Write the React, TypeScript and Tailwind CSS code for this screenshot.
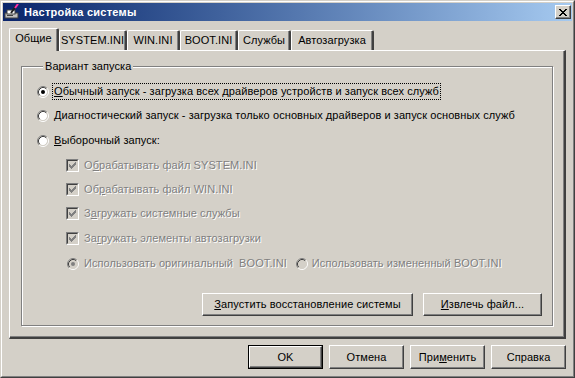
import React from 'react'

const font = "font-['Liberation_Sans',Arial,sans-serif]"
const dis = 'text-[#808080] [text-shadow:1px_1px_0_#ffffff]'

function Radio({ checked, disabled }: { checked?: boolean; disabled?: boolean }) {
  return (
    <svg width="12" height="12" viewBox="0 0 12 12" className="shrink-0">
      <circle cx="6" cy="6" r="4.2" fill={disabled ? '#d4d0c8' : '#ffffff'} />
      <path d="M9.89 2.11A5.5 5.5 0 0 0 2.11 9.89" stroke="#808080" fill="none" />
      <path d="M2.11 9.89A5.5 5.5 0 0 0 9.89 2.11" stroke="#ffffff" fill="none" />
      <path d="M9.18 2.82A4.5 4.5 0 0 0 2.82 9.18" stroke="#404040" fill="none" />
      <path d="M2.82 9.18A4.5 4.5 0 0 0 9.18 2.82" stroke="#d4d0c8" fill="none" />
      {checked && <circle cx="6" cy="6" r="2" fill={disabled ? '#808080' : '#000000'} />}
    </svg>
  )
}

const checkPx = [
  [6, 0], [5, 1], [6, 1], [0, 2], [4, 2], [5, 2], [6, 2],
  [0, 3], [1, 3], [3, 3], [4, 3], [5, 3], [0, 4], [1, 4], [2, 4], [3, 4], [4, 4],
  [1, 5], [2, 5], [3, 5], [2, 6],
]

function Check() {
  return (
    <div className="w-[13px] h-[13px] shrink-0 border border-t-[#808080] border-l-[#808080] border-r-white border-b-white">
      <div className="w-full h-full border border-t-[#404040] border-l-[#404040] border-r-[#d4d0c8] border-b-[#d4d0c8] bg-[#d4d0c8] flex items-center justify-center">
        <svg width="7" height="7" viewBox="0 0 7 7" shapeRendering="crispEdges">
          {checkPx.map(([x, y]) => (
            <rect key={`${x}-${y}`} x={x} y={y} width="1" height="1" fill="#808080" />
          ))}
        </svg>
      </div>
    </div>
  )
}

function Button({ children, className }: { children: React.ReactNode; className: string }) {
  return (
    <div className={`h-[23px] border border-t-white border-l-white border-r-[#404040] border-b-[#404040] shadow-[inset_-1px_-1px_#808080] flex items-center justify-center ${className}`}>
      {children}
    </div>
  )
}

function Tab({ label, w, active }: { label: string; w: string; active?: boolean }) {
  return (
    <div
      className={`${w} ${active ? 'h-[23px] relative z-10 -mb-px bg-[#d4d0c8]' : 'h-[20px]'} rounded-t-[2px] border-t border-l border-t-white border-l-white border-r-2 border-r-[#404040] shadow-[inset_-1px_0_#808080] flex items-start justify-center pt-[3px]`}
    >
      {label}
    </div>
  )
}

function Row({ children, className }: { children: React.ReactNode; className: string }) {
  return <div className={`flex items-center h-[17px] ${className}`}>{children}</div>
}

export default function App() {
  return (
    <div className={`w-[575px] h-[378px] bg-[#d4d0c8] text-[11px] leading-[13px] tracking-[0.08px] text-black ${font} border border-t-[#d4d0c8] border-l-[#d4d0c8] border-r-[#404040] border-b-[#404040]`}>
      <div className="h-full flex flex-col p-px border border-t-white border-l-white border-r-[#808080] border-b-[#808080]">
        {/* title bar */}
        <div className="h-[18px] shrink-0 flex items-center pl-[1px] pr-[1px] bg-gradient-to-r from-[#0a246a] to-[#a6caf0]">
          <svg width="16" height="16" viewBox="0 0 16 16" className="shrink-0">
            <rect x="1" y="9" width="13" height="5" fill="#c0c0c0" stroke="#404040" strokeWidth="1" />
            <rect x="3" y="6" width="8" height="4" fill="#ffffff" stroke="#404040" strokeWidth="1" />
            <rect x="3" y="11" width="6" height="1" fill="#404040" />
            <path d="M7 9L12 2" stroke="#202020" strokeWidth="2" />
            <path d="M11 4L14 0" stroke="#ff2ea0" strokeWidth="2" />
          </svg>
          <span className="ml-[4px] font-bold text-white tracking-[0.25px]">Настройка системы</span>
          <div className="ml-auto w-[16px] h-[14px] bg-[#d4d0c8] border border-t-white border-l-white border-r-[#404040] border-b-[#404040] shadow-[inset_-1px_-1px_#808080] flex items-center justify-center">
            <svg width="8" height="7" viewBox="0 0 8 7" shapeRendering="crispEdges">
              <path d="M0 0h2v1h-2zM6 0h2v1h-2zM1 1h2v1h-2zM5 1h2v1h-2zM2 2h4v1h-4zM3 3h2v1h-2zM2 4h4v1h-4zM1 5h2v1h-2zM5 5h2v1h-2zM0 6h2v1h-2zM6 6h2v1h-2z" fill="#000" />
            </svg>
          </div>
        </div>

        {/* tabs + panel */}
        <div className="px-[6px] pt-[7px]">
          <div className="flex items-end h-[22px]">
            <Tab label="Общие" w="w-[50px]" active />
            <Tab label="SYSTEM.INI" w="w-[68px]" />
            <Tab label="WIN.INI" w="w-[53px]" />
            <Tab label="BOOT.INI" w="w-[58px]" />
            <Tab label="Службы" w="w-[53px]" />
            <Tab label="Автозагрузка" w="w-[83px]" />
          </div>
          <div className="h-[289px] flex flex-col px-[11px] pt-[9px] pb-[11px] border border-t-white border-l-white border-r-2 border-b-2 border-r-[#404040] border-b-[#404040] shadow-[inset_-1px_-1px_#808080]">
            <fieldset className="flex-1 flex flex-col border border-[#808080] shadow-[inset_1px_1px_#ffffff,1px_1px_#ffffff] pl-[15px] pr-[10px] pb-[9px]">
              <legend className="ml-[6px] px-[2px] bg-[#d4d0c8]">Вариант запуска</legend>
              <Row className="mt-[10px]">
                <Radio checked />
                <span className="ml-[3px] px-[1px] h-[17px] flex items-center border border-dotted border-black">
                  <span className="underline">О</span>бычный запуск - загрузка всех драйверов устройств и запуск всех служб
                </span>
              </Row>
              <Row className="mt-[7px]">
                <Radio />
                <span className="ml-[5px]">
                  <span className="underline">Д</span>иагностический запуск - загрузка только основных драйверов и запуск основных служб
                </span>
              </Row>
              <Row className="mt-[8px]">
                <Radio />
                <span className="ml-[5px]">
                  <span className="underline">В</span>ыборочный запуск:
                </span>
              </Row>
              <div className="pl-[29px] flex flex-col">
                <Row className={`mt-[8px] ${dis}`}>
                  <Check />
                  <span className="ml-[5px]">О<span className="underline">б</span>рабатывать файл SYSTEM.INI</span>
                </Row>
                <Row className={`mt-[7px] ${dis}`}>
                  <Check />
                  <span className="ml-[5px]">Об<span className="underline">р</span>абатывать файл WIN.INI</span>
                </Row>
                <Row className={`mt-[7px] ${dis}`}>
                  <Check />
                  <span className="ml-[5px]">З<span className="underline">а</span>гружать системные службы</span>
                </Row>
                <Row className={`mt-[8px] ${dis}`}>
                  <Check />
                  <span className="ml-[5px]">За<span className="underline">г</span>ружать элементы автозагрузки</span>
                </Row>
                <Row className={`mt-[8px] ${dis}`}>
                  <div className="ml-[1px]"><Radio checked disabled /></div>
                  <span className="ml-[5px]">Использовать оригинальный&nbsp; BOOT.INI</span>
                  <div className="ml-[9px]"><Radio disabled /></div>
                  <span className="ml-[4px]">Использовать измененный BOOT.INI</span>
                </Row>
              </div>
              <div className="mt-auto flex justify-end gap-[10px]">
                <Button className="w-[211px]">
                  <span><span className="underline">З</span>апустить восстановление системы</span>
                </Button>
                <Button className="w-[119px]">
                  <span><span className="underline">И</span>звлечь файл...</span>
                </Button>
              </div>
            </fieldset>
          </div>
        </div>

        {/* bottom buttons */}
        <div className="flex justify-end gap-[6px] pr-[6px] mt-[6px]">
          <div className="w-[75px] h-[24px] border border-black">
            <Button className="w-full h-full">OK</Button>
          </div>
          <Button className="w-[75px] h-[24px]">Отмена</Button>
          <Button className="w-[75px] h-[24px]">
            <span>При<span className="underline">м</span>енить</span>
          </Button>
          <Button className="w-[75px] h-[24px]">Справка</Button>
        </div>
      </div>
    </div>
  )
}
